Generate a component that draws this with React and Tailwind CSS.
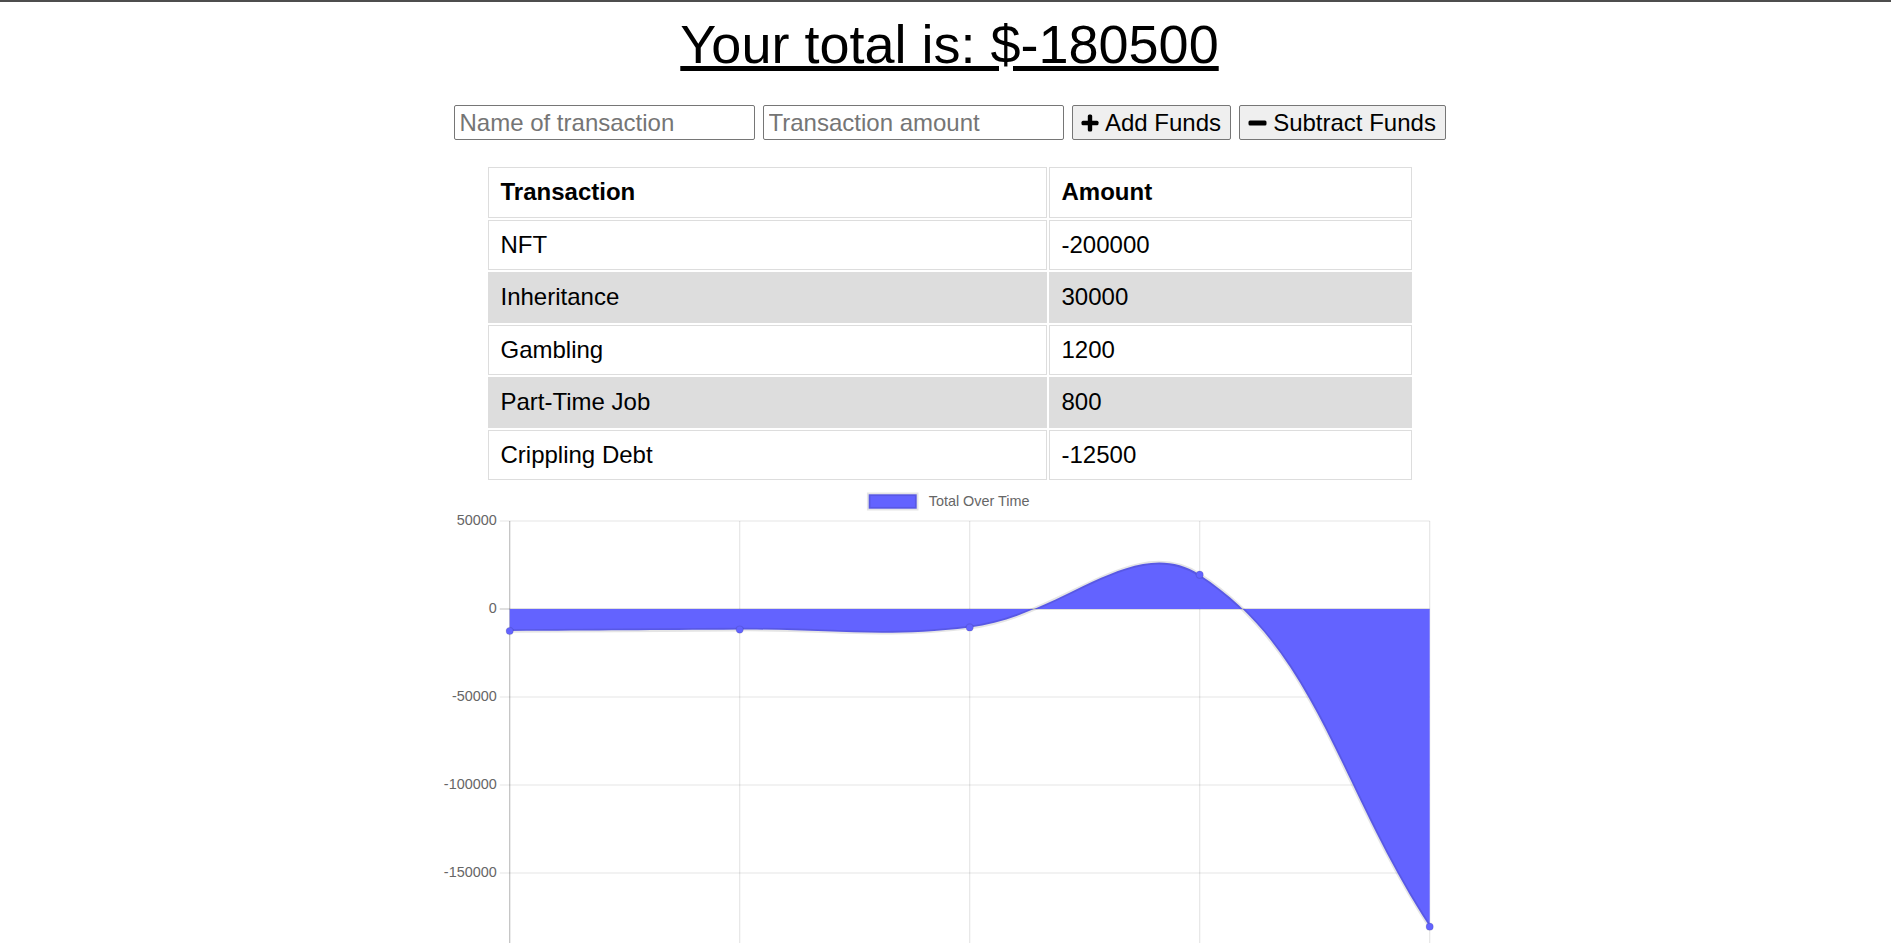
import React from 'react';

const rows = [
  { name: 'NFT', amount: '-200000' },
  { name: 'Inheritance', amount: '30000' },
  { name: 'Gambling', amount: '1200' },
  { name: 'Part-Time Job', amount: '800' },
  { name: 'Crippling Debt', amount: '-12500' },
];

// running total, oldest first
const totals = [-12500, -11700, -10500, 19500, -180500];

// page coordinates of the plot area
const X0 = 508.7;
const STEP = 230;
const ZERO = 609;
const PER = 88 / 50000;
const LEFT = 440;
const TOP = 482;

const points = totals.map((v, i) => ({ x: X0 + i * STEP, y: ZERO - v * PER }));

// same spline as chart.js (tension 0.4)
const controls = points.map((p, i) => {
  const prev = points[i - 1] || p;
  const next = points[i + 1] || p;
  const d01 = Math.hypot(p.x - prev.x, p.y - prev.y);
  const d12 = Math.hypot(next.x - p.x, next.y - p.y);
  const sum = d01 + d12 || 1;
  const fa = 0.4 * (d01 / sum);
  const fb = 0.4 * (d12 / sum);
  return {
    px: p.x - fa * (next.x - prev.x),
    py: p.y - fa * (next.y - prev.y),
    nx: p.x + fb * (next.x - prev.x),
    ny: p.y + fb * (next.y - prev.y),
  };
});

let line = `M${points[0].x},${points[0].y}`;
for (let i = 1; i < points.length; i++) {
  const a = controls[i - 1];
  const b = controls[i];
  line += ` C${a.nx},${a.ny} ${b.px},${b.py} ${points[i].x},${points[i].y}`;
}
const last = points[points.length - 1];
const area = `${line} L${last.x},${ZERO} L${points[0].x},${ZERO} Z`;

const yTicks = [
  { label: '50000', y: 521 },
  { label: '0', y: 609 },
  { label: '-50000', y: 697 },
  { label: '-100000', y: 785 },
  { label: '-150000', y: 873 },
];

const Chart = () => (
  <svg width="1018" height="461" className="mx-auto block">
    <g transform={`translate(${-LEFT},${-TOP})`} fontFamily="'Liberation Sans', Arial, sans-serif">
      {/* legend */}
      <rect x="867.7" y="494.3" width="48" height="14.4" fill="#6363ff" stroke="rgba(0,0,0,0.1)" strokeWidth="3.6" />
      <text x="927.7" y="501.8" fontSize="14.4" fill="#666" dominantBaseline="middle">Total Over Time</text>

      {/* grid */}
      {yTicks.map((t) => (
        <g key={t.label}>
          <line x1="498.7" x2="1428.7" y1={t.y} y2={t.y} stroke={t.label === '0' ? 'rgba(0,0,0,0.25)' : 'rgba(0,0,0,0.1)'} strokeWidth="1.2" />
          <text x="495.7" y={t.y} fontSize="14.4" fill="#666" textAnchor="end" dominantBaseline="middle">{t.label}</text>
        </g>
      ))}
      {points.map((p, i) => (
        <line key={i} x1={p.x} x2={p.x} y1="521" y2="961" stroke={i === 0 ? 'rgba(0,0,0,0.25)' : 'rgba(0,0,0,0.1)'} strokeWidth="1.2" />
      ))}

      {/* data */}
      <path d={area} fill="#6363ff" />
      <path d={line} fill="none" stroke="rgba(0,0,0,0.1)" strokeWidth="3.6" />
      {points.map((p, i) => (
        <circle key={i} cx={p.x} cy={p.y} r="3.6" fill="#6363ff" stroke="rgba(0,0,0,0.1)" strokeWidth="1.2" />
      ))}
    </g>
  </svg>
);

const PlusIcon = () => (
  <svg width="18" height="18" viewBox="0 0 18 18" className="shrink-0">
    <rect x="6.8" y="0.5" width="4.4" height="17" rx="1.5" fill="#000" />
    <rect x="0.5" y="6.8" width="17" height="4.4" rx="1.5" fill="#000" />
  </svg>
);

const MinusIcon = () => (
  <svg width="19" height="18" viewBox="0 0 19 18" className="shrink-0">
    <rect x="0.5" y="6.6" width="18" height="4.8" rx="1.5" fill="#000" />
  </svg>
);

const App = () => {
  return (
    <div className="min-h-screen overflow-hidden bg-white font-['Liberation_Sans',Arial,sans-serif] text-black">
      <div className="h-[2px] bg-[#4d4d4d]" />

      <div className="pl-2">
        <h1 className="mt-[11px] text-center text-[54px] leading-[62px] font-normal underline">
          Your total is: $-180500
        </h1>

        {/* form */}
        <div className="mt-[30px] flex justify-center gap-2">
          <input
            type="text"
            placeholder="Name of transaction"
            className="h-[35px] w-[301px] rounded-[2px] border border-[#767676] px-[5px] text-[24px] outline-none placeholder:text-[#757575]"
          />
          <input
            type="number"
            placeholder="Transaction amount"
            className="h-[35px] w-[301px] rounded-[2px] border border-[#767676] px-[5px] text-[24px] outline-none placeholder:text-[#757575]"
          />
          <button className="flex h-[35px] w-[159px] items-center justify-center gap-[6px] rounded-[2px] border border-[#767676] bg-[#efefef] text-[24px]">
            <PlusIcon /> Add Funds
          </button>
          <button className="flex h-[35px] w-[207px] items-center justify-center gap-[6px] rounded-[2px] border border-[#767676] bg-[#efefef] text-[24px]">
            <MinusIcon /> Subtract Funds
          </button>
        </div>

        {/* transactions */}
        <table className="mx-auto mt-[25px] border-separate border-spacing-[2px] text-[24px]">
          <thead>
            <tr>
              <th className="h-[50.5px] w-[559px] border border-[#dddddd] py-0 pl-3 text-left font-bold">Transaction</th>
              <th className="h-[50.5px] w-[363px] border border-[#dddddd] py-0 pl-3 text-left font-bold">Amount</th>
            </tr>
          </thead>
          <tbody>
            {rows.map((r, i) => (
              <tr key={r.name}>
                <td className={`h-[50.5px] border border-[#dddddd] py-0 pl-3 ${i % 2 === 1 ? 'bg-[#dddddd]' : ''}`}>{r.name}</td>
                <td className={`h-[50.5px] border border-[#dddddd] py-0 pl-3 ${i % 2 === 1 ? 'bg-[#dddddd]' : ''}`}>{r.amount}</td>
              </tr>
            ))}
          </tbody>
        </table>

        <Chart />
      </div>
    </div>
  );
};

export default App;
